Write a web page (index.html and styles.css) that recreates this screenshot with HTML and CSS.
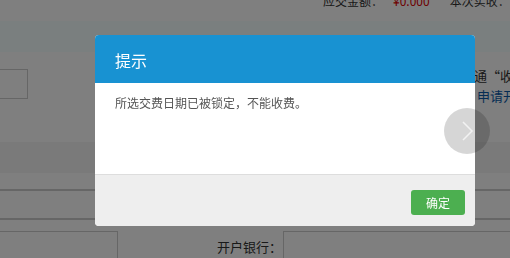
FILE: index.html
```html
<!DOCTYPE html>
<html lang="zh-CN">
<head>
  <meta charset="UTF-8">
  <title>交费</title>
  <link rel="stylesheet" href="styles.css">
</head>
<body>

<div class="page">
  <div class="summary">
    <span class="label">应交金额：</span>
    <span class="money">¥0.000</span>
    <span class="label other">本次实收：</span>
  </div>
  <div class="section-head"></div>
  <div class="form-row">
    <div class="box small"></div>
    <div class="notes">
      <p>开通“收费”</p>
      <p class="link">申请开通</p>
    </div>
  </div>
  <div class="section-band"></div>
  <div class="line-row"></div>
  <div class="line-row tall"></div>
  <div class="bank-row">
    <div class="box wide"></div>
    <span class="bank-label">开户银行：</span>
    <div class="box bank"></div>
  </div>
</div>

<div class="overlay"></div>

<div class="modal">
  <div class="modal-head">提示</div>
  <div class="modal-body">所选交费日期已被锁定，不能收费。</div>
  <div class="modal-foot">
    <button class="btn-ok">确定</button>
  </div>
</div>

<div class="next-btn">
  <svg width="46" height="46" viewBox="0 0 46 46">
    <polyline points="19,14 28,23 19,32" fill="none" stroke="#f2f2f2" stroke-width="1.5"/>
  </svg>
</div>

</body>
</html>
```

FILE: styles.css
```css
body {
  margin: 0;
  padding: 0;
  font-family: "Noto Sans CJK SC", "Liberation Sans", sans-serif;
  font-size: 12px;
  color: #333;
  background-color: #fff;
  overflow: hidden;
}
.page {
  width: 510px;
}
.summary {
  height: 21px;
  display: flex;
  overflow: hidden;
}
.summary span {
  margin-top: -8px;
  line-height: 18px;
  font-size: 12px;
  white-space: nowrap;
}
.summary .label {
  margin-left: 323px;
}
.summary .money {
  margin-left: 10px;
  color: #d00;
}
.summary .other {
  margin-left: 20px;
}
.section-head {
  height: 31px;
  background-color: #f4fefe;
}
.form-row {
  height: 90px;
  display: flex;
  justify-content: space-between;
}
.box {
  border: 1px solid #ccc;
  box-sizing: border-box;
  flex-shrink: 0;
}
.box.small {
  width: 29px;
  height: 30px;
  margin-top: 17px;
  margin-left: -1px;
}
.notes {
  width: 36px;
  overflow: hidden;
  white-space: nowrap;
  padding-top: 14px;
  font-size: 13px;
}
.notes p {
  margin: 0 0 0 -13px;
  line-height: 20px;
}
.notes .link {
  margin-left: 3px;
  color: #0a5aa8;
}
.section-band {
  height: 31px;
  background-color: #f4f4f4;
}
.line-row {
  height: 16px;
  border-bottom: 2px solid #ccc;
}
.line-row.tall {
  height: 27px;
}
.bank-row {
  display: flex;
  align-items: flex-start;
  padding-top: 11px;
  overflow: hidden;
}
.box.wide {
  width: 119px;
  height: 40px;
  margin-left: -1px;
}
.bank-label {
  flex-shrink: 0;
  white-space: nowrap;
  margin-left: 99px;
  margin-top: 6px;
  font-size: 13px;
  color: #333;
}
.box.bank {
  width: 230px;
  height: 40px;
  margin-left: 1px;
}
.overlay {
  position: fixed;
  left: 0;
  top: 0;
  right: 0;
  bottom: 0;
  background-color: rgba(0, 0, 0, 0.5);
}
.modal {
  position: absolute;
  left: 95px;
  top: 35px;
  width: 380px;
  border-radius: 4px;
  overflow: hidden;
  background-color: #fff;
}
.modal-head {
  height: 48px;
  line-height: 50px;
  padding-left: 20px;
  background-color: #1892d2;
  color: #fff;
  font-size: 16px;
}
.modal-body {
  height: 71px;
  padding: 10px 20px;
  color: #555;
  font-size: 12px;
  line-height: 20px;
  border-bottom: 1px solid #ddd;
}
.modal-foot {
  height: 51px;
  background-color: #eee;
  display: flex;
  justify-content: flex-end;
  align-items: flex-start;
}
.btn-ok {
  margin-top: 15px;
  margin-right: 10px;
  width: 54px;
  height: 25px;
  border: none;
  border-radius: 3px;
  background-color: #4caf50;
  color: #fff;
  font-family: inherit;
  font-size: 12px;
  padding: 0;
  cursor: pointer;
}
.next-btn {
  position: absolute;
  left: 444px;
  top: 108px;
  width: 46px;
  height: 46px;
  border-radius: 50%;
  background-color: rgba(0, 0, 0, 0.16);
}
.next-btn svg {
  display: block;
}
```
